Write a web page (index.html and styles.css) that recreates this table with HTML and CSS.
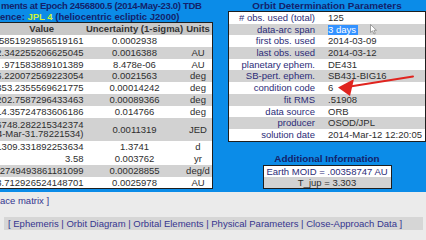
FILE: index.html
```html
<!DOCTYPE html>
<html>
<head>
<meta charset="utf-8">
<link rel="stylesheet" href="styles.css">
</head>
<body>
<div class="page">
  <div class="band">
    <section class="left">
      <div class="ltitle">
        <div class="tl t1">ments at Epoch 2456800.5 (2014-May-23.0) TDB</div>
        <div class="tl t2">ence: <span class="jpl">JPL 4</span> (heliocentric ecliptic J2000)</div>
      </div>
      <div class="etable">
        <div class="erow head"><div class="cv">Value</div><div class="cu">Uncertainty (1-sigma)</div><div class="cn">Units</div></div>
        <div class="erow"><div class="cv"><span>.5851929856519161</span></div><div class="cu">0.0002938</div><div class="cn"></div></div>
        <div class="erow g"><div class="cv"><span>2.342255206625045</span></div><div class="cu">0.0016388</div><div class="cn">AU</div></div>
        <div class="erow"><div class="cv"><span>.971583889101389</span></div><div class="cu">8.478e-06</div><div class="cn">AU</div></div>
        <div class="erow g"><div class="cv"><span>6.220072569223054</span></div><div class="cu">0.0021563</div><div class="cn">deg</div></div>
        <div class="erow"><div class="cv"><span>353.2355569621775</span></div><div class="cu">0.00014242</div><div class="cn">deg</div></div>
        <div class="erow g"><div class="cv"><span>202.7587296433463</span></div><div class="cu">0.00089366</div><div class="cn">deg</div></div>
        <div class="erow"><div class="cv"><span>14.35724783606186</span></div><div class="cu">0.014766</div><div class="cn">deg</div></div>
        <div class="erow g dbl"><div class="cv"><span class="two">2456748.282215342374<br>(2014-Mar-31.78221534)</span></div><div class="cu">0.0011319</div><div class="cn">JED</div></div>
        <div class="erow"><div class="cv"><span>1309.331892253634</span></div><div class="cu">1.3741</div><div class="cn">d</div></div>
        <div class="erow"><div class="cv"><span>3.58</span></div><div class="cu">0.003762</div><div class="cn">yr</div></div>
        <div class="erow g"><div class="cv"><span>.2749493861181099</span></div><div class="cu">0.00028855</div><div class="cn">deg/d</div></div>
        <div class="erow"><div class="cv"><span>3.712926524148701</span></div><div class="cu">0.0025978</div><div class="cn">AU</div></div>
      </div>
    </section>
    <section class="right">
      <div class="rtitle">Orbit Determination Parameters</div>
      <div class="otable">
        <div class="orow"><div class="lab"># obs. used (total)</div><div class="val">125</div></div>
        <div class="orow g"><div class="lab">data-arc span</div><div class="val"><span class="sel">3 days</span></div></div>
        <div class="orow"><div class="lab">first obs. used</div><div class="val">2014-03-09</div></div>
        <div class="orow g"><div class="lab">last obs. used</div><div class="val">2014-03-12</div></div>
        <div class="orow"><div class="lab">planetary ephem.</div><div class="val">DE431</div></div>
        <div class="orow g"><div class="lab">SB-pert. ephem.</div><div class="val">SB431-BIG16</div></div>
        <div class="orow"><div class="lab">condition code</div><div class="val">6</div></div>
        <div class="orow g"><div class="lab">fit RMS</div><div class="val">.51908</div></div>
        <div class="orow"><div class="lab">data source</div><div class="val">ORB</div></div>
        <div class="orow g"><div class="lab">producer</div><div class="val">OSOD/JPL</div></div>
        <div class="orow"><div class="lab">solution date</div><div class="val">2014-Mar-12 12:20:05</div></div>
      </div>
      <div class="atitle">Additional Information</div>
      <div class="abox">
        <div class="arow">Earth MOID = .00358747 AU</div>
        <div class="arow g">T_jup = 3.303</div>
      </div>
    </section>
  </div>
  <div class="cov">ace matrix ]</div>
  <div class="nav">[ Ephemeris | Orbit Diagram | Orbital Elements | Physical Parameters | Close-Approach Data ]</div>

  <svg class="arrow" width="426" height="240" viewBox="0 0 426 240">
    <path d="M413 76.5 L350 86.5" stroke="#e0241f" stroke-width="2" stroke-linecap="round" fill="none"/>
    <path d="M338 87.5 L354 79 L350 96 Z" fill="#e0241f"/>
  </svg>
  <svg class="cursor" width="8" height="11" viewBox="0 0 8 11">
    <path d="M0.5 0.5 L0.5 8.5 L2.5 6.8 L4 10 L5.3 9.4 L3.9 6.3 L6.5 6.3 Z" fill="#fff" stroke="#8a8a8a" stroke-width="0.8"/>
  </svg>
</div>
</body>
</html>
```

FILE: styles.css
```css
* { box-sizing: border-box; }
html, body { margin: 0; padding: 0; }
body {
  background: #ebebeb;
  font-family: "Liberation Sans", Arial, sans-serif;
  font-size: 9.5px;
  color: #2e2e2e;
  overflow: hidden;
  width: 426px;
  height: 240px;
}
.page { position: relative; width: 426px; height: 240px; }

.band {
  display: flex;
  background: #0b8ce8;
  height: 192px;
}

.left { width: 213px; flex-shrink: 0; }
.ltitle { font-weight: bold; color: #13226b; font-size: 9.5px; line-height: 11px; white-space: nowrap; }
.t1 { letter-spacing: -0.3px; padding-left: 1px; }
.t2 { letter-spacing: 0; }
.jpl { color: #c9f23a; }

.etable {
  width: 213px;
  border: 1px solid #1e1e1e;
  border-left: none;
  background: #fff;
}
.erow {
  display: grid;
  grid-template-columns: 85px 99px 28px;
  height: 11.8px;
  line-height: 11.8px;
  background: #fff;
}
.erow.g { background: #d2d2d2; }
.erow.head { background: #c8c8c8; font-weight: bold; height: 12px; line-height: 12px; color: #333; }
.erow.head .cv { justify-content: center; }
.erow.dbl { height: 23.6px; line-height: 23.6px; }
.cv { display: flex; justify-content: flex-end; white-space: nowrap; padding-right: 1.5px; }
.cv .two { line-height: 9.6px; text-align: right; align-self: center; }
.cu, .cn { text-align: center; white-space: nowrap; }

.right { flex: 1; padding-left: 15px; }
.rtitle, .atitle {
  text-align: center;
  font-weight: bold;
  color: #13226b;
  font-size: 9.9px;
  line-height: 11px;
  width: 198px;
}
.otable {
  width: 198px;
  border: 1px solid #1e1e1e;
  background: #fff;
}
.orow {
  display: grid;
  grid-template-columns: 92px 1fr;
  height: 11.7px;
  line-height: 11.7px;
  white-space: nowrap;
}
.orow.g { background: #d2d2d2; }
.lab { text-align: right; padding-right: 6px; color: #2c2c78; }
.val { padding-left: 7px; color: #2e2e2e; }
.sel { background: #3392ff; color: #fff; padding-right: 2px; display: inline-block; line-height: 10.5px; }

.atitle { margin-top: 11px; }
.abox {
  width: 129px;
  margin: 1.5px 0 0 34.5px;
  border: 1px solid #1e1e1e;
  background: #fff;
  text-align: center;
  color: #2c2c78;
}
.arow { height: 11px; line-height: 11px; }
.arow.g { background: #d2d2d2; color: #2e2e2e; }

.cov { color: #35358f; line-height: 11px; padding-top: 3px; }
.nav {
  margin: 11px 0 0 4px;
  width: 419px;
  background: #d6d6d6;
  height: 13px;
  line-height: 13px;
  padding-left: 4px;
  color: #35358f;
  white-space: nowrap;
}

.arrow { position: absolute; left: 0; top: 0; pointer-events: none; }
.cursor { position: absolute; left: 370px; top: 24px; }
```
